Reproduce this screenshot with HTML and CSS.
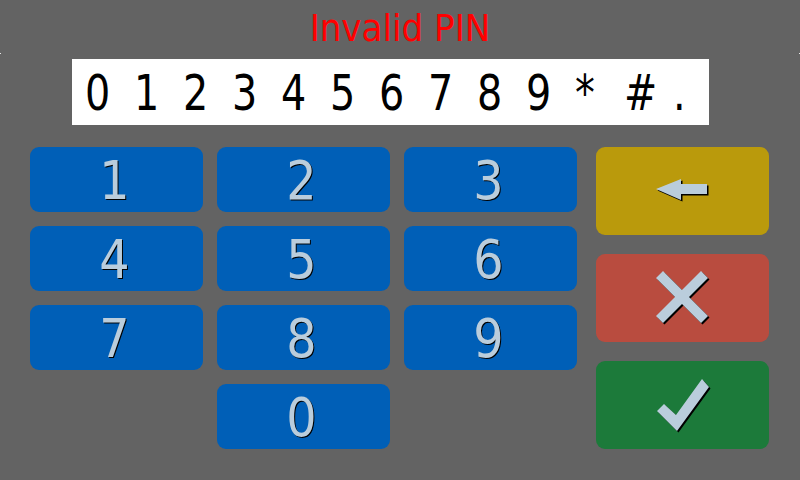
FILE: index.html
```html
<!DOCTYPE html>
<html>
<head>
<meta charset="utf-8">
<link rel="stylesheet" href="styles.css">
</head>
<body>
<div class="screen">
  <div class="title">Invalid PIN</div>
  <div class="ticks"><span></span><span></span></div>
  <div class="display">
    <span class="ch">0</span><span class="ch">1</span><span class="ch">2</span><span class="ch">3</span><span class="ch">4</span><span class="ch">5</span><span class="ch">6</span><span class="ch">7</span><span class="ch">8</span><span class="ch">9</span><span class="ch">*</span><span class="ch">#</span><span class="ch">.</span>
  </div>
  <div class="pad">
    <div class="keys">
      <div class="key">1</div><div class="key">2</div><div class="key">3</div>
      <div class="key">4</div><div class="key">5</div><div class="key">6</div>
      <div class="key">7</div><div class="key">8</div><div class="key">9</div>
      <div class="spacer"></div><div class="key">0</div>
    </div>
    <div class="actions">
      <div class="act back">
        <svg width="54" height="24" viewBox="0 0 54 24">
          <polygon points="1.5,11.5 26.5,1.5 26.5,6.5 52.5,6.5 52.5,16.5 26.5,16.5 26.5,22.5" fill="#000"/>
          <polygon points="0,10 25,0 25,5 51,5 51,15 25,15 25,21" fill="#bacddc"/>
        </svg>
      </div>
      <div class="act cancel">
        <svg width="54" height="54" viewBox="0 0 54 54">
          <polygon points="7,0 26,19 45,0 52,7 33,26 52,45 45,52 26,33 7,52 0,45 19,26 0,7" fill="#000" transform="translate(1.5,1.5)"/>
          <polygon points="7,0 26,19 45,0 52,7 33,26 52,45 45,52 26,33 7,52 0,45 19,26 0,7" fill="#bacddc"/>
        </svg>
      </div>
      <div class="act ok">
        <svg width="56" height="58" viewBox="0 0 56 58">
          <polygon points="2,35 9,28 21,39 47,3 54,11 22,55" fill="#000" transform="translate(1.5,1.5)"/>
          <polygon points="2,35 9,28 21,39 47,3 54,11 22,55" fill="#bacddc"/>
        </svg>
      </div>
    </div>
  </div>
</div>
</body>
</html>
```
FILE: styles.css
```css
html, body {
  margin: 0;
  padding: 0;
  background: #636363;
}
.screen {
  width: 800px;
  height: 480px;
  font-family: "DejaVu Sans", sans-serif;
  font-stretch: condensed;
  display: flex;
  flex-direction: column;
}
.title {
  height: 52px;
  color: #ff0000;
  font-size: 38px;
  line-height: 57px;
  text-align: center;
}
.ticks {
  height: 7px;
  display: flex;
  justify-content: space-between;
}
.ticks span {
  width: 1px;
  height: 1px;
  margin-top: 1px;
  background: #e8e8e8;
}
.display {
  margin-left: 72px;
  width: 637px;
  height: 66px;
  background: #ffffff;
  color: #000;
  font-size: 49px;
  line-height: 70px;
  display: grid;
  grid-template-columns: repeat(13, 49px);
}
.ch {
  display: block;
  padding-left: 13px;
  transform: scaleX(0.9);
  transform-origin: 13px 0;
}
.pad {
  margin-top: 22px;
  margin-left: 30px;
  display: flex;
  gap: 19px;
}
.keys {
  display: grid;
  grid-template-columns: repeat(3, 173px);
  grid-auto-rows: 65px;
  gap: 14px;
}
.key {
  background: #005fb7;
  border-radius: 9px;
  color: #bacddc;
  font-size: 53px;
  line-height: 67px;
  text-align: center;
  padding-right: 4px;
  text-shadow: 1px 1px 0 #000;
}
.actions {
  display: flex;
  flex-direction: column;
  gap: 19px;
}
.act {
  width: 173px;
  height: 88px;
  border-radius: 9px;
  display: flex;
  align-items: center;
  justify-content: center;
}
.back { background: #ba9a0c; }
.cancel { background: #b94c3f; }
.ok { background: #1c7a3a; }
```
